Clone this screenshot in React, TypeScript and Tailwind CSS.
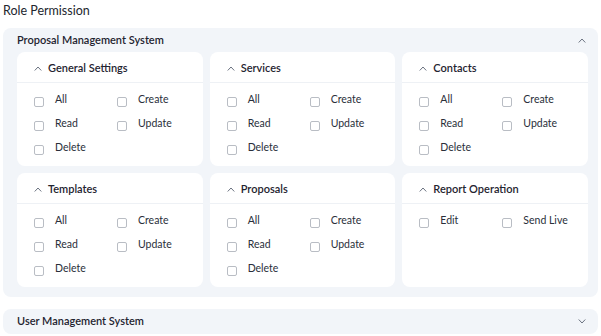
import React from 'react'

type Section = {
  title: string
  perms: string[]
}

const sections: Section[] = [
  { title: 'General Settings', perms: ['All', 'Create', 'Read', 'Update', 'Delete'] },
  { title: 'Services', perms: ['All', 'Create', 'Read', 'Update', 'Delete'] },
  { title: 'Contacts', perms: ['All', 'Create', 'Read', 'Update', 'Delete'] },
  { title: 'Templates', perms: ['All', 'Create', 'Read', 'Update', 'Delete'] },
  { title: 'Proposals', perms: ['All', 'Create', 'Read', 'Update', 'Delete'] },
  { title: 'Report Operation', perms: ['Edit', 'Send Live'] },
]

function Chevron({ up = true, className = '' }: { up?: boolean; className?: string }) {
  return (
    <svg width="8" height="5" viewBox="0 0 8 5" fill="none" className={className}>
      <polyline
        points={up ? '1,4.2 4,1 7,4.2' : '1,0.8 4,4 7,0.8'}
        stroke="#6b7280"
        strokeWidth="1"
        strokeLinecap="round"
        strokeLinejoin="round"
      />
    </svg>
  )
}

function PermCard({ section }: { section: Section }) {
  return (
    <div className="h-[114px] rounded-lg bg-white">
      {/* Card header */}
      <div className="flex h-[31px] items-center gap-[6px] border-b border-[#eef1f5] pl-[17px] pt-[2px]">
        <Chevron />
        <span className="text-[11px] font-semibold text-[#1f2430]">{section.title}</span>
      </div>
      {/* Checkboxes */}
      <div className="grid grid-cols-[83px_1fr] px-[17px] pt-[10px]">
        {section.perms.map((p) => (
          <label key={p} className="flex h-[24px] items-start gap-[11px]">
            <span className="mt-[4px] block h-[10px] w-[10px] rounded-[2px] border border-[#b9bdc4] bg-white" />
            <span className="text-[10.5px] leading-[12px] text-[#2a2f3a]">{p}</span>
          </label>
        ))}
      </div>
    </div>
  )
}

export default function App() {
  return (
    <div className="h-[336px] w-[601px] bg-white font-['Lato',sans-serif]">
      <div className="flex h-[28px] items-start px-[3px] pt-[2px] text-[12.5px] text-[#22262e]">
        Role Permission
      </div>

      {/* Proposal Management System */}
      <div className="mx-[3px] rounded-lg bg-[#f2f5f9] pb-[10px] pl-[14px] pr-[10px]">
        <div className="flex h-[24px] items-center justify-between">
          <span className="text-[11px] font-semibold text-[#1f2430]">Proposal Management System</span>
          <Chevron className="mr-[2px]" />
        </div>
        <div className="grid grid-cols-3 gap-[7px]">
          {sections.map((s) => (
            <PermCard key={s.title} section={s} />
          ))}
        </div>
      </div>

      {/* User Management System */}
      <div className="mx-[3px] mt-[12px] flex h-[25px] items-center justify-between rounded-lg bg-[#f2f5f9] pl-[14px] pr-[12px]">
        <span className="text-[11px] font-semibold text-[#1f2430]">User Management System</span>
        <Chevron up={false} />
      </div>
    </div>
  )
}
